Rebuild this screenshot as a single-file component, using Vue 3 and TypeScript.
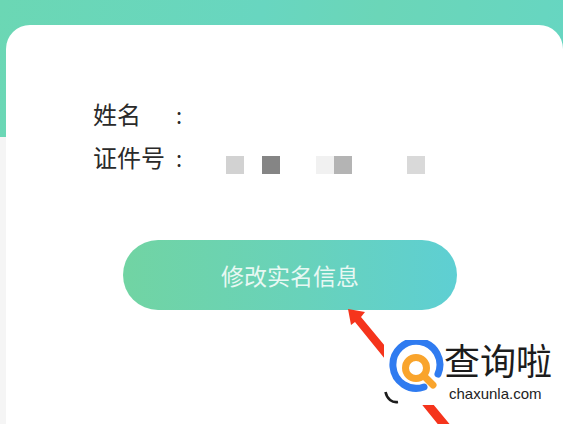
<script setup lang="ts">
interface Blot { color: string; gap: number }
const blots: Blot[] = [
  { color: '#d2d2d2', gap: 0 },
  { color: '#858585', gap: 18 },
  { color: '#f1f1f1', gap: 36 },
  { color: '#b4b4b4', gap: 0 },
  { color: '#d9d9d9', gap: 55 },
]
</script>

<template>
  <div class="page">
    <section class="card">
      <div class="row first">
        <span class="label">姓名</span>
        <span class="colon">:</span>
      </div>
      <div class="row second">
        <span class="label">证件号</span>
        <span class="colon">:</span>
        <div class="blots">
          <i
            v-for="(b, i) in blots"
            :key="i"
            class="blot"
            :style="{ background: b.color, marginLeft: b.gap + 'px' }"
          ></i>
        </div>
      </div>
      <button class="action" type="button">修改实名信息</button>
    </section>

    <svg class="arrow" width="563" height="424" viewBox="0 0 563 424" aria-hidden="true">
      <path d="M348 309 L365 312 L361 317 L452 427 L445 433 L355 322 L351 325 Z" fill="#f5341c" />
    </svg>

    <div class="mark">
      <svg class="mark-logo" width="60" height="62" viewBox="0 0 60 62" aria-hidden="true">
        <path d="M51 34 A23.5 23.5 0 1 0 37 47" fill="none" stroke="#2f7bf0" stroke-width="7" stroke-linecap="round" />
        <circle cx="29" cy="28" r="10.5" fill="none" stroke="#f9a42c" stroke-width="7" />
        <path d="M37 36 L46 45" stroke="#f9a42c" stroke-width="7" stroke-linecap="round" />
      </svg>
      <div class="mark-text">
        <span class="mark-cn">查询啦</span>
        <span class="mark-en">chaxunla.com</span>
      </div>
      <svg class="mark-tail" width="16" height="14" viewBox="0 0 16 14" aria-hidden="true">
        <path d="M1.5 1 C3 8 8 12 14 11" fill="none" stroke="#1c1c1c" stroke-width="2.6" />
      </svg>
    </div>
  </div>
</template>

<style>
html, body { margin: 0; padding: 0; background: #fff; }
</style>

<style scoped>
.page {
  position: relative;
  width: 563px;
  height: 424px;
  overflow: hidden;
  padding-top: 25px;
  box-sizing: border-box;
  background-color: #f5f5f5;
  background-image: linear-gradient(100deg, #6bd7b4 0%, #68d6c0 45%, #6bd6b8 65%, #66d6c2 100%);
  background-size: 100% 137px;
  background-repeat: no-repeat;
  font-family: "Noto Sans CJK SC", "Noto Sans", sans-serif;
}
.card {
  margin-left: 6px;
  height: 440px;
  background: #fff;
  border-radius: 24px 24px 0 0;
  padding: 72px 0 0 87px;
  box-sizing: border-box;
}
.row {
  display: flex;
  align-items: center;
  height: 34px;
  color: #2a2a2a;
  font-size: 24px;
  line-height: 34px;
}
.second { margin-top: 9px; }
.label { width: 83px; flex: none; }
.colon { width: 50px; flex: none; font-size: 22px; }
.blots { display: flex; margin-top: 16px; }
.blot { display: block; width: 18px; height: 18px; }
.action {
  display: block;
  width: 334px;
  height: 70px;
  margin: 66px 0 0 30px;
  padding: 0;
  border: 0;
  border-radius: 35px;
  background: linear-gradient(90deg, #71d4a3 0%, #68d2bb 55%, #5ecfd3 100%);
  color: #e8f8f3;
  font: inherit;
  font-size: 23px;
  letter-spacing: 0;
}
.arrow { position: absolute; left: 0; top: 0; }
.mark {
  position: absolute;
  left: 384px;
  top: 339px;
  width: 170px;
  height: 66px;
  background: #fff;
  display: flex;
}
.mark-logo { flex: none; margin: 1px 0 0 3px; }
.mark-text { display: flex; flex-direction: column; align-items: flex-start; margin-left: -3px; }
.mark-cn {
  font-family: "Noto Sans CJK SC", sans-serif;
  font-size: 36px;
  line-height: 40px;
  color: #1c1c1c;
  white-space: nowrap;
}
.mark-en {
  font-family: "Liberation Sans", Arial, sans-serif;
  font-size: 15px;
  line-height: 18px;
  margin: 6px 0 0 5px;
  color: #222;
  white-space: nowrap;
}
.mark-tail { position: absolute; left: 0; top: 52px; }
</style>
